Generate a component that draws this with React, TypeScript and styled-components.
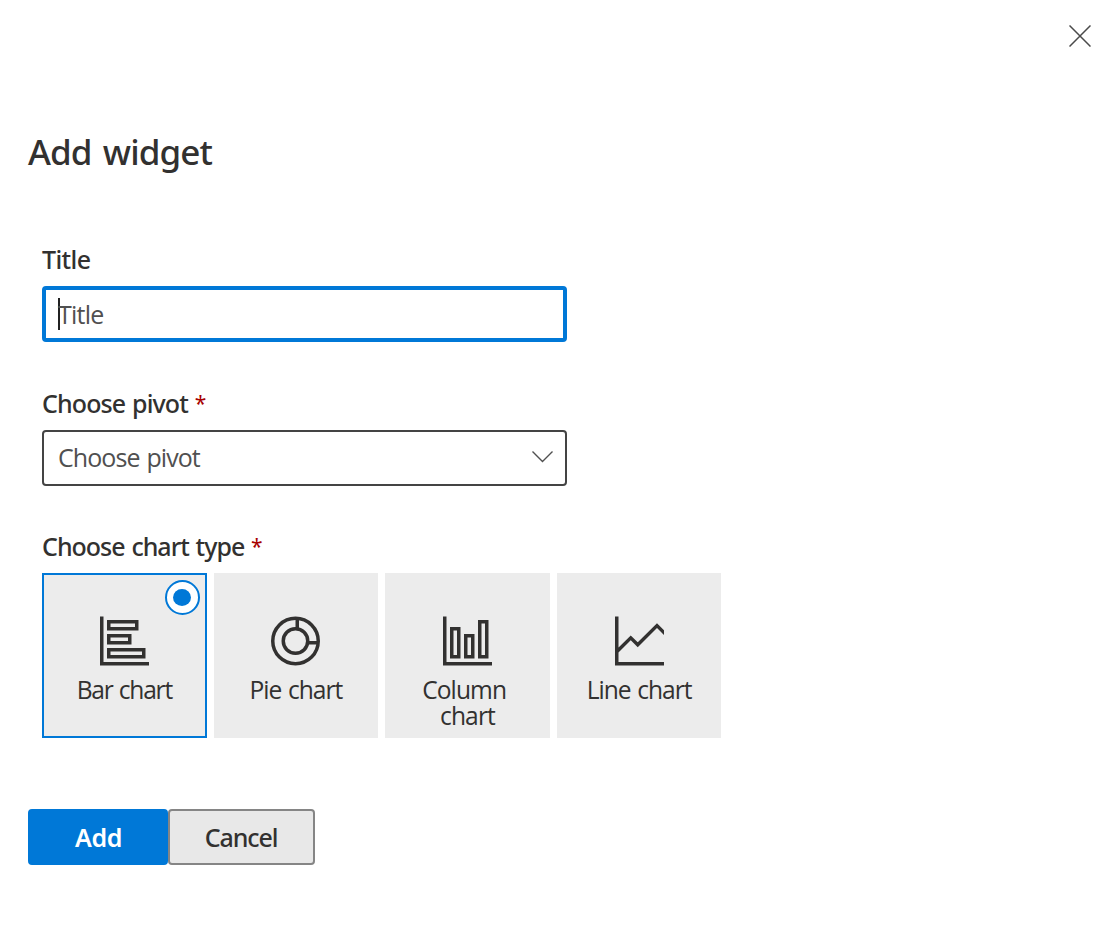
import React from "react";
import styled, { createGlobalStyle } from "styled-components";

const GlobalStyle = createGlobalStyle`
  * { box-sizing: border-box; }
  body {
    margin: 0;
    background: #fff;
    color: #323130;
    font-family: "Open Sans", "Noto Sans", sans-serif;
    font-size: 25px;
  }
`;

const Panel = styled.main`
  display: flex;
  flex-direction: column;
  align-items: flex-start;
  height: 932px;
  padding: 16px 18px 0 28px;
`;

const CloseButton = styled.button`
  display: flex;
  align-self: flex-end;
  padding: 9px;
  border: 0;
  background: none;
`;

const Heading = styled.h1`
  margin: 76px 0 0;
  font: 500 35px/40px "Noto Sans", sans-serif;
  letter-spacing: -0.9px;
  word-spacing: 3px;
`;

const Form = styled.form`
  display: flex;
  flex-direction: column;
  gap: 44px;
  margin: 71px 0 0 14px;
`;

const Field = styled.div`
  display: flex;
  flex-direction: column;

  &:first-child {
    margin-bottom: 1px;
  }
`;

const Label = styled.div<{ $spacing: number }>`
  height: 43px;
  font: 500 25px/32px "Noto Sans", sans-serif;
  letter-spacing: ${(p) => p.$spacing}px;
  word-spacing: 1.3px;
`;

const Required = styled.span`
  color: #a80000;
  font-weight: 400;
  font-size: 21px;
  line-height: 1;
  vertical-align: 2px;
`;

const ControlBox = styled.div<{ $focused?: boolean }>`
  display: flex;
  align-items: center;
  justify-content: space-between;
  width: 525px;
  height: 56px;
  padding: ${(p) => (p.$focused ? "0 12px" : "0 12px 0 14px")};
  border: ${(p) => (p.$focused ? "4px solid #0078d7" : "2px solid #444")};
  border-radius: 4px;
  color: #505050;
  letter-spacing: ${(p) => (p.$focused ? -0.75 : -0.93)}px;
  word-spacing: 1.3px;

  svg {
    margin-bottom: 2px;
  }
`;

const Caret = styled.span`
  width: 2px;
  height: 32px;
  margin-right: -2px;
  background: #212121;
`;

const Placeholder = styled.span<{ $raised?: boolean }>`
  flex: 1;
  padding-bottom: ${(p) => (p.$raised ? 2 : 0)}px;
  line-height: 34px;
`;

const Choices = styled.div`
  display: flex;
  gap: 7px;
`;

const Card = styled.div<{ $selected?: boolean }>`
  position: relative;
  display: flex;
  flex-direction: column;
  align-items: center;
  width: 164.6px;
  height: 165px;
  padding-top: 43px;
  background: #ececec;
  box-shadow: ${(p) => (p.$selected ? "inset 0 0 0 2px #0078d7" : "none")};
`;

const CardLabel = styled.div<{ $spacing: number }>`
  margin-top: 11px;
  font-size: 24.6px;
  line-height: 26px;
  text-align: center;
  white-space: pre;
  letter-spacing: ${(p) => p.$spacing}px;
  word-spacing: 1.2px;
`;

const Radio = styled.span`
  position: absolute;
  top: 7px;
  right: 7px;
  display: grid;
  place-items: center;
  width: 35px;
  height: 35px;
  border: 2px solid #0078d7;
  border-radius: 50%;
  background: #fff;

  &::after {
    content: "";
    width: 18px;
    height: 17px;
    border-radius: 50%;
    background: #0078d7;
  }
`;

const Actions = styled.footer`
  display: flex;
  margin-top: 71px;
`;

const Button = styled.button<{ $primary?: boolean }>`
  width: ${(p) => (p.$primary ? 140 : 147)}px;
  height: 56px;
  padding: ${(p) => (p.$primary ? "0 0 0 1px" : "0 1px 0 0")};
  border: 2px solid ${(p) => (p.$primary ? "#0078d7" : "#858585")};
  border-radius: 4px;
  background: ${(p) => (p.$primary ? "#0078d7" : "#e8e8e8")};
  color: ${(p) => (p.$primary ? "#fff" : "#323130")};
  font: ${(p) => (p.$primary ? 600 : 500)} 25px/34px "Noto Sans", sans-serif;
  letter-spacing: ${(p) => (p.$primary ? -0.4 : -1.1)}px;
`;

const ChartIcon = ({ children }: { children: React.ReactNode }) => (
  <svg width="49" height="50" viewBox="0 -.143 14 14.286" fill="none" stroke="#323130">
    {children}
  </svg>
);

const BarIcon = () => (
  <ChartIcon>
    <path d="M.5 0V13.5H14M2.5 1.5h8v2h-8zM2.5 5.5h6v2h-6zM2.5 9.5h10v2h-10z" />
  </ChartIcon>
);

const PieIcon = () => (
  <ChartIcon>
    <circle cx="7" cy="7" r="6.5" />
    <circle cx="7" cy="7" r="3.5" />
    <path d="M7.5 1v2.6M10.4 7.5h2.8" />
  </ChartIcon>
);

const ColumnIcon = () => (
  <ChartIcon>
    <path d="M.5 0V13.5H14M2.5 3.5h2v8h-2zM6.5 5.5h2v6h-2zM10.5 1.5h2v10h-2z" />
  </ChartIcon>
);

const LineIcon = () => (
  <ChartIcon>
    <path d="M.5 0V13.5H14M.5 10.1L4.5 6.1L6.5 8.1L12 2.6L14.5 5.1" />
  </ChartIcon>
);

const chartTypes = [
  { label: "Bar chart", spacing: -1.25, Icon: BarIcon },
  { label: "Pie chart", spacing: -1, Icon: PieIcon },
  { label: "Column \nchart", spacing: -0.9, Icon: ColumnIcon },
  { label: "Line chart", spacing: -1, Icon: LineIcon },
];

export default function App() {
  return (
    <>
      <GlobalStyle />
      <Panel>
        <CloseButton aria-label="Close" type="button">
          <svg width="22" height="22" viewBox="0 0 22 22" stroke="#4a4a4a" strokeWidth="1.5">
            <path d="M.5 .5L21.5 21.5M21.5 .5L.5 21.5" />
          </svg>
        </CloseButton>
        <Heading>Add widget</Heading>
        <Form>
          <Field>
            <Label $spacing={-0.6}>Title</Label>
            <ControlBox $focused>
              <Caret />
              <Placeholder>Title</Placeholder>
            </ControlBox>
          </Field>
          <Field>
            <Label $spacing={-0.9}>
              Choose pivot <Required>*</Required>
            </Label>
            <ControlBox>
              <Placeholder $raised>Choose pivot</Placeholder>
              <svg width="21" height="12" viewBox="0 0 21 12" fill="none" stroke="#505050" strokeWidth="1.4">
                <path d="M.5 .5L10.5 10.5L20.5 .5" />
              </svg>
            </ControlBox>
          </Field>
          <Field>
            <Label $spacing={-1}>
              Choose chart type <Required>*</Required>
            </Label>
            <Choices>
              {chartTypes.map(({ label, spacing, Icon }, i) => (
                <Card key={label} $selected={i === 0}>
                  <Icon />
                  <CardLabel $spacing={spacing}>{label}</CardLabel>
                  {i === 0 && <Radio />}
                </Card>
              ))}
            </Choices>
          </Field>
        </Form>
        <Actions>
          <Button $primary type="button">Add</Button>
          <Button type="button">Cancel</Button>
        </Actions>
      </Panel>
    </>
  );
}
